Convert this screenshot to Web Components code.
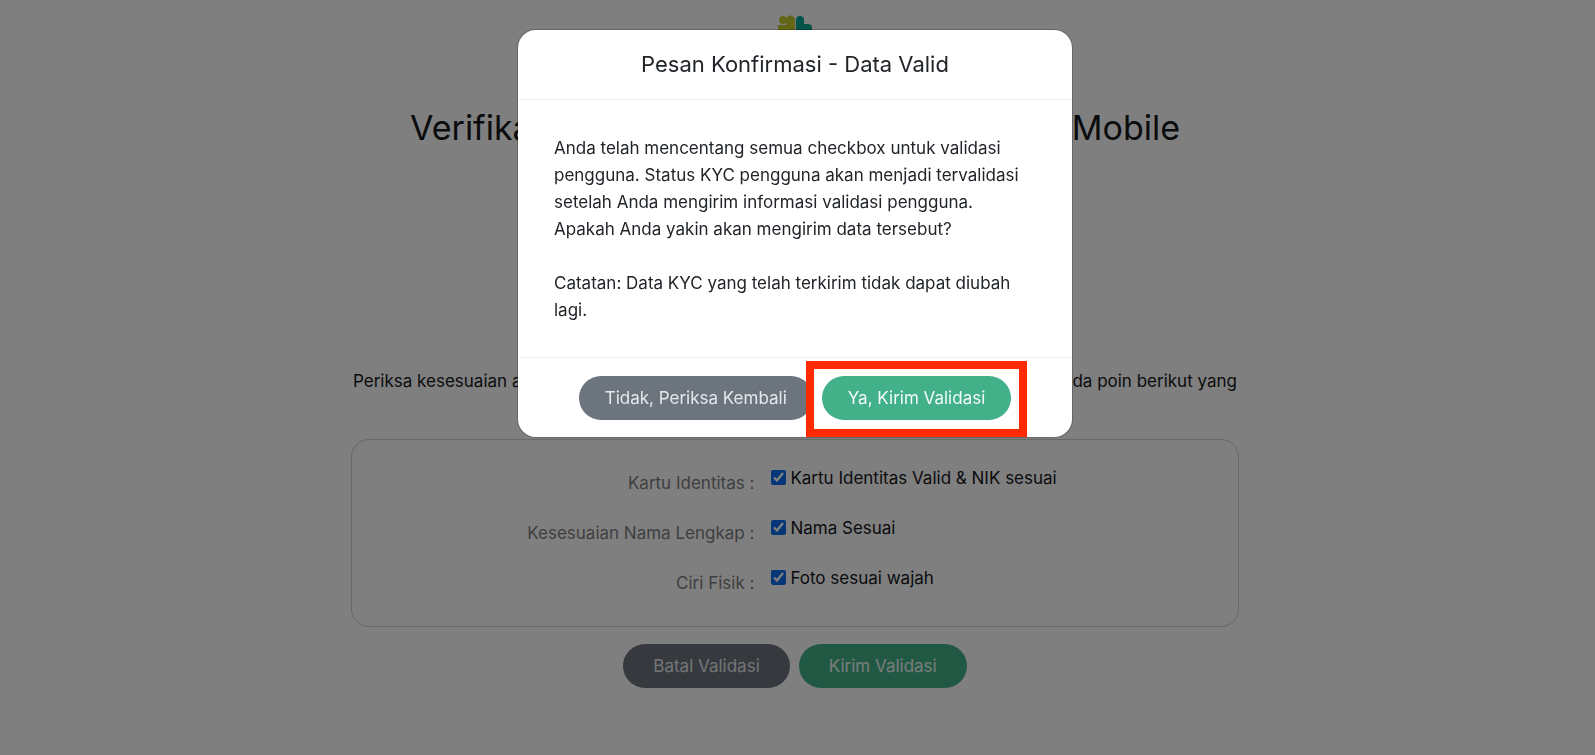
<!DOCTYPE html>
<html lang="id">
<head>
<meta charset="utf-8">
<title>Verifikasi Mobile</title>
<style>
  html, body { margin: 0; min-height: 100%; }
  body {
    background: #fff;
    color: #15171a;
    font: 17px/27px Inter, "Noto Sans", sans-serif;
    padding-right: 5px;
    --green: #42b088;
    --gray: #6c747e;
  }
</style>
</head>
<body>
<kyc-page>
  <kyc-logo slot="logo"></kyc-logo>
  <span slot="title">Verifikasi</span>
  <span slot="title">Mobile</span>
  <span slot="intro">Periksa kesesuaian antara</span>
  <span slot="intro">pada poin berikut yang</span>
  <check-row label="Kartu Identitas :">Kartu Identitas Valid &amp; NIK sesuai</check-row>
  <check-row label="Kesesuaian Nama Lengkap :">Nama Sesuai</check-row>
  <check-row label="Ciri Fisik :">Foto sesuai wajah</check-row>
  <pill-button slot="actions" tone="gray">Batal Validasi</pill-button>
  <pill-button slot="actions" tone="green">Kirim Validasi</pill-button>
</kyc-page>

<confirm-dialog>
  <span slot="title">Pesan Konfirmasi - Data Valid</span>
  <p>Anda telah mencentang semua checkbox untuk validasi pengguna. Status KYC pengguna akan menjadi tervalidasi setelah Anda mengirim informasi validasi pengguna. Apakah Anda yakin akan mengirim data tersebut?</p>
  <p>Catatan: Data KYC yang telah terkirim tidak dapat diubah lagi.</p>
  <pill-button slot="actions" tone="gray">Tidak, Periksa Kembali</pill-button>
  <pill-button slot="actions" tone="green" marked>Ya, Kirim Validasi</pill-button>
</confirm-dialog>

<script>
  class BaseElement extends HTMLElement {
    render(html) {
      const root = this.attachShadow({ mode: "open" });
      const template = document.createElement("template");
      template.innerHTML = html;
      root.append(template.content.cloneNode(true));
      return root;
    }
  }

  customElements.define("kyc-logo", class extends BaseElement {
    constructor() {
      super();
      this.render(`
        <style>
          :host { display: block; height: 34px; }
          svg { display: block; }
        </style>
        <svg width="34" height="34" viewBox="0 0 34 34" aria-hidden="true">
          <path fill="#c9cc2e" d="M0 10H8V5a4 4 0 0 1 9 0V34H9A9 9 0 0 1 0 26z"/>
          <circle cx="5" cy="5" r="4" fill="#c9cc2e"/>
          <path fill="#06a796" d="M18 5a4 4 0 0 1 8 0V9h4a4 4 0 0 1 4 4v3a3 3 0 0 1-3 3h-5v15h-8z"/>
        </svg>`);
    }
  });

  customElements.define("pill-button", class extends BaseElement {
    constructor() {
      super();
      this.render(`
        <style>
          :host { display: block; position: relative; }
          button {
            display: block;
            font: inherit;
            line-height: 24px;
            color: #fff;
            border: 0;
            border-radius: 22px;
            padding: 10px var(--pill-pad, 26px);
            background: var(--gray);
            white-space: nowrap;
            cursor: pointer;
          }
          :host([tone="gray"]) button { color: #e6e9ec; }
          :host([tone="green"]) button { background: var(--green); color: #f2fbf7; }
          :host([marked])::after {
            content: "";
            position: absolute;
            inset: -15px -16px -17px;
            border: 8px solid #ff2a00;
            pointer-events: none;
          }
        </style>
        <button type="button"><slot></slot></button>`);
    }
  });

  customElements.define("check-row", class extends BaseElement {
    constructor() {
      super();
      const root = this.render(`
        <style>
          :host { display: grid; grid-template-columns: 47fr 53fr; height: 50px; }
          .name { text-align: right; padding: 9px 14px 0 0; color: #7e7f82; }
          .option { display: flex; align-items: start; padding-top: 4px; }
          input { width: 15px; height: 15px; margin: 5px 4px 0 3px; accent-color: #0a6cf0; }
        </style>
        <div class="name"></div>
        <div class="option"><input type="checkbox" id="box" checked><label for="box"><slot></slot></label></div>`);
      root.querySelector(".name").textContent = this.getAttribute("label");
    }
  });

  customElements.define("kyc-page", class extends BaseElement {
    constructor() {
      super();
      this.render(`
        <style>
          :host { display: block; max-width: 888px; margin: 0 auto; padding-top: 15px; --pill-pad: 30px; }
          .logo { display: flex; justify-content: center; }
          h1 {
            display: flex; justify-content: space-between;
            max-width: 770px; margin: 57px auto 0;
            font-size: 34px; line-height: 44px; font-weight: 400;
          }
          .intro {
            display: flex; justify-content: space-between;
            margin: 218px 0 0; padding: 0 2px;
          }
          .card {
            margin-top: 44px; padding: 21px 0 15px;
            border: 1px solid #cfd0d2; border-radius: 18px;
          }
          .actions { display: flex; justify-content: center; gap: 9px; margin-top: 17px; }
        </style>
        <main>
          <div class="logo"><slot name="logo"></slot></div>
          <h1><slot name="title"></slot></h1>
          <div class="intro"><slot name="intro"></slot></div>
          <div class="card"><slot></slot></div>
          <div class="actions"><slot name="actions"></slot></div>
        </main>`);
    }
  });

  customElements.define("confirm-dialog", class extends BaseElement {
    constructor() {
      super();
      this.render(`
        <style>
          :host {
            position: fixed; inset: 0; box-sizing: border-box;
            display: flex; justify-content: center; align-items: start;
            padding: 30px 5px 0 0;
            background: rgba(0, 0, 0, .5);
            --pill-pad: 26px;
          }
          section {
            width: 100%; max-width: 554px;
            background: #fff; border-radius: 18px;
            box-shadow: 0 0 0 1px rgba(0, 0, 0, .2);
            color: #212529;
          }
          h2 {
            margin: 0; padding: 20px 35px 21px; text-align: center;
            font-size: 22px; line-height: 28px; font-weight: 400;
            border-bottom: 1px solid #eceef0;
          }
          .body { padding: 35px 40px 33px 36px; }
          ::slotted(p) { margin: 0 0 27px; }
          ::slotted(p:last-of-type) { margin: 0; }
          footer {
            display: flex; justify-content: center; gap: 9px;
            padding: 18px 0 17px; border-top: 1px solid #eceef0;
          }
        </style>
        <section role="dialog" aria-modal="true" aria-labelledby="title">
          <h2 id="title"><slot name="title"></slot></h2>
          <div class="body"><slot></slot></div>
          <footer><slot name="actions"></slot></footer>
        </section>`);
    }
  });
</script>
</body>
</html>
